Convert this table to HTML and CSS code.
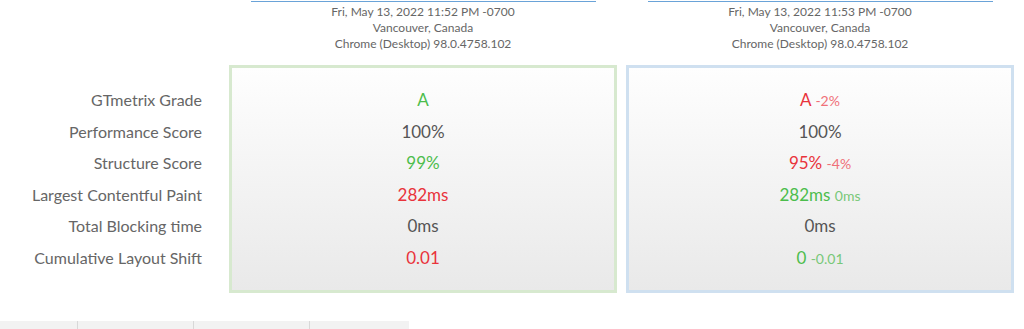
FILE: index.html
```html
<!DOCTYPE html>
<html>
<head>
<meta charset="utf-8">
<link rel="stylesheet" href="styles.css">
</head>
<body>
<div class="page">
  <div class="heads">
    <div class="spacer"></div>
    <div class="head">
      <div class="link-line"></div>
      <div class="meta">Fri, May 13, 2022 11:52 PM -0700</div>
      <div class="meta">Vancouver, Canada</div>
      <div class="meta">Chrome (Desktop) 98.0.4758.102</div>
    </div>
    <div class="head">
      <div class="link-line"></div>
      <div class="meta">Fri, May 13, 2022 11:53 PM -0700</div>
      <div class="meta">Vancouver, Canada</div>
      <div class="meta">Chrome (Desktop) 98.0.4758.102</div>
    </div>
  </div>
  <div class="compare">
    <div class="labels">
      <div class="row">GTmetrix Grade</div>
      <div class="row">Performance Score</div>
      <div class="row">Structure Score</div>
      <div class="row">Largest Contentful Paint</div>
      <div class="row">Total Blocking time</div>
      <div class="row">Cumulative Layout Shift</div>
    </div>
    <div class="box box-green">
      <div class="row good">A</div>
      <div class="row">100%</div>
      <div class="row good">99%</div>
      <div class="row bad">282ms</div>
      <div class="row">0ms</div>
      <div class="row bad">0.01</div>
    </div>
    <div class="box box-blue">
      <div class="row bad">A <span class="delta delta-bad">-2%</span></div>
      <div class="row">100%</div>
      <div class="row bad">95% <span class="delta delta-bad">-4%</span></div>
      <div class="row good">282ms <span class="delta delta-good">0ms</span></div>
      <div class="row">0ms</div>
      <div class="row good">0 <span class="delta delta-good">-0.01</span></div>
    </div>
  </div>
  <div class="tabs">
    <div class="tab t1"></div>
    <div class="tab t2"></div>
    <div class="tab t3"></div>
    <div class="tab t4"></div>
  </div>
</div>
</body>
</html>
```
FILE: styles.css
```css
html, body {
  margin: 0;
  padding: 0;
  background: #fff;
}
body {
  font-family: "Lato", "Liberation Sans", sans-serif;
  color: #666;
  overflow: hidden;
}
.page {
  width: 1024px;
}
.heads {
  display: flex;
  height: 65px;
}
.spacer {
  width: 229px;
}
.head {
  width: 388px;
  display: flex;
  flex-direction: column;
  align-items: center;
}
.head + .head {
  margin-left: 9px;
}
.link-line {
  width: 345px;
  height: 1px;
  border-bottom: 1px solid #6aa3d8;
  margin-bottom: 2px;
}
.meta {
  font-size: 12px;
  line-height: 16px;
  color: #666;
}
.compare {
  display: flex;
}
.labels {
  width: 202px;
  margin-right: 27px;
  padding-top: 19px;
  text-align: right;
  font-size: 16px;
  color: #666;
}
.row {
  height: 31.6px;
  line-height: 31.6px;
  white-space: nowrap;
}
.box {
  width: 388px;
  height: 228px;
  box-sizing: border-box;
  border: 3px solid #d7e9cf;
  padding-top: 16px;
  text-align: center;
  font-size: 17px;
  color: #555;
  background: linear-gradient(#fefefe, #e9e9e9);
}
.box-blue {
  margin-left: 9px;
  border-color: #cfe0f0;
}
.good { color: #4cbd4c; }
.bad { color: #e9333b; }
.delta {
  font-size: 14px;
}
.delta-bad { color: #f07078; }
.delta-good { color: #78c878; }
.tabs {
  display: flex;
  margin-top: 28px;
  height: 8px;
}
.tab {
  background: #f2f2f2;
  height: 8px;
}
.tab + .tab {
  border-left: 1px solid #d8d8d8;
}
.t1 { width: 77px; }
.t2 { width: 115px; }
.t3 { width: 115px; }
.t4 { width: 99px; }
```
